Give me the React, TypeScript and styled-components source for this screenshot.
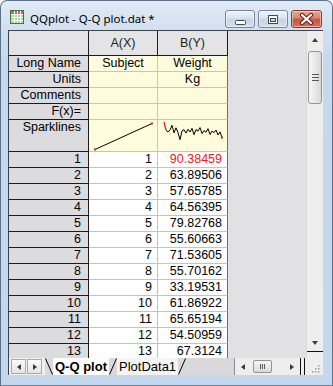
import styled, { createGlobalStyle, css } from 'styled-components';

const GlobalStyle = createGlobalStyle`
  html, body {
    margin: 0;
    padding: 0;
    background: #ffffff;
  }
  body {
    font-family: 'Liberation Sans', Arial, sans-serif;
  }
`;

const WEIGHTS = [
  '90.38459', '63.89506', '57.65785', '64.56395', '79.82768', '55.60663', '71.53605',
  '55.70162', '33.19531', '61.86922', '65.65194', '54.50959', '67.3124',
];

// values past row 13 are not visible, only used for the sparkline shape
const SPARK_B = [
  90.38, 63.9, 57.66, 64.56, 79.83, 55.61, 71.54, 55.7, 33.2, 61.87, 65.65, 54.51, 67.31,
  58.2, 70.1, 49.5, 66.3, 60.8, 72.4, 52.9, 63.0, 57.1, 68.8, 50.2, 61.4, 55.9, 64.7, 48.3, 58.6, 40.1,
];

const META_ROWS = [
  { label: 'Long Name', a: 'Subject', b: 'Weight' },
  { label: 'Units', a: '', b: 'Kg' },
  { label: 'Comments', a: '', b: '' },
  { label: 'F(x)=', a: '', b: '' },
];

export default function App() {
  const sparkPts = SPARK_B.map((v, i) => [6 + i * 2, 2 + (90.38 - v) * 0.31] as const);
  const sparkLine = sparkPts.slice(1).map(([x, y]) => `${x},${y.toFixed(1)}`).join(' ');
  const last = sparkPts[sparkPts.length - 1];

  return (
    <>
      <GlobalStyle />
      <Window>
        <TitleBar>
          <AppIcon viewBox="0 0 14 14">
            <rect x="0.5" y="0.5" width="13" height="13" fill="#a6dca0" stroke="#3c7a3a" />
            <rect x="1" y="1" width="12" height="3" fill="#e4576b" />
            <path d="M4.5 1v12M7.5 1v12M10.5 1v12M1 4.5h12M1 7.5h12M1 10.5h12" stroke="#ffffff" strokeWidth="1" />
          </AppIcon>
          <Title>QQplot - Q-Q plot.dat *</Title>
          <CaptionButtons>
            <CaptionButton>
              <svg width="11" height="12" viewBox="0 0 11 12">
                <rect x="0.5" y="7.5" width="10" height="4" rx="1" fill="#ffffff" stroke="#3a4a5e" />
              </svg>
            </CaptionButton>
            <CaptionButton>
              <svg width="10" height="9" viewBox="0 0 10 9">
                <rect x="0.5" y="0.5" width="9" height="8" fill="#ffffff" stroke="#3a4a5e" />
                <rect x="2.5" y="3.5" width="5" height="3" fill="#c9d6e6" stroke="#3a4a5e" />
              </svg>
            </CaptionButton>
            <CaptionButton $close>
              <svg width="15" height="12" viewBox="0 0 15 12">
                <path d="M3 2l9 8M12 2l-9 8" stroke="#5a2118" strokeWidth="4.2" strokeLinecap="round" />
                <path d="M3 2l9 8M12 2l-9 8" stroke="#ffffff" strokeWidth="2.2" strokeLinecap="round" />
              </svg>
            </CaptionButton>
          </CaptionButtons>
        </TitleBar>

        <Client>
          <Main>
            <Sheet>
              <Row $h={25}>
                <ColHead $w={80} />
                <ColHead $w={69}>A(X)</ColHead>
                <ColHead $w={70}>B(Y)</ColHead>
              </Row>
              {META_ROWS.map((r) => (
                <Row key={r.label} $h={16}>
                  <LabelCell>{r.label}</LabelCell>
                  <MetaCell $w={69}>{r.a}</MetaCell>
                  <MetaCell $w={70} $edge>{r.b}</MetaCell>
                </Row>
              ))}
              <Row $h={32}>
                <LabelCell>Sparklines</LabelCell>
                <MetaCell $w={69}>
                  <Spark viewBox="0 0 68 31">
                    <line x1="6" y1="29.5" x2="63" y2="3.5" stroke="#000" strokeWidth="1" />
                    <rect x="5" y="28.5" width="2" height="2" fill="#e0201f" />
                    <rect x="62" y="2.5" width="2" height="2" fill="#e0201f" />
                  </Spark>
                </MetaCell>
                <MetaCell $w={70} $edge>
                  <Spark viewBox="0 0 69 31">
                    <polyline points={sparkLine} fill="none" stroke="#000" strokeWidth="1" />
                    <line
                      x1={sparkPts[0][0]}
                      y1={sparkPts[0][1]}
                      x2={sparkPts[1][0]}
                      y2={sparkPts[1][1]}
                      stroke="#e0201f"
                      strokeWidth="1.3"
                    />
                    <rect x={last[0] - 1} y={last[1] - 1} width="2" height="2" fill="#e0201f" />
                  </Spark>
                </MetaCell>
              </Row>
              {WEIGHTS.map((w, i) => (
                <Row key={i} $h={16}>
                  <RowNum>{i + 1}</RowNum>
                  <DataCell $w={69}>{i + 1}</DataCell>
                  <DataCell $w={70} $edge $red={i === 0}>
                    {w}
                  </DataCell>
                </Row>
              ))}
            </Sheet>

            <VScroll>
              <ArrowBox>
                <Arrow $dir="up" />
              </ArrowBox>
              <Thumb>
                <Grip />
              </Thumb>
              <Track />
              <ArrowBox>
                <Arrow $dir="down" />
              </ArrowBox>
              <SplitBox />
            </VScroll>
          </Main>

          <BottomBar>
            <TabNav>
              <NavButton>
                <Arrow $dir="left" />
              </NavButton>
              <NavButton>
                <Arrow $dir="right" />
              </NavButton>
            </TabNav>
            <Tabs>
              <Slant viewBox="0 0 8 17">
                <path d="M0.5 0.5L7.5 16.5" stroke="#000" fill="none" />
              </Slant>
              <Tab $active>Q-Q plot</Tab>
              <Slant viewBox="0 0 8 17">
                <path d="M7.5 0.5L0.5 16.5" stroke="#000" fill="none" />
              </Slant>
              <Tab>PlotData1</Tab>
              <Slant viewBox="0 0 8 17">
                <path d="M7.5 0.5L0.5 16.5" stroke="#000" fill="none" />
              </Slant>
            </Tabs>
            <HScroll>
              <ArrowBox $h>
                <Arrow $dir="left" />
              </ArrowBox>
              <HThumb>
                <HGrip />
              </HThumb>
              <Track />
              <ArrowBox $h>
                <Arrow $dir="right" />
              </ArrowBox>
            </HScroll>
            <SplitBar />
            <SizeGrip viewBox="0 0 18 17">
              {[
                [13, 13], [10, 13], [7, 13], [13, 10], [10, 10], [13, 7],
              ].map(([x, y]) => (
                <rect key={`${x}-${y}`} x={x} y={y} width="1.5" height="1.5" fill="#9a9a9a" />
              ))}
            </SizeGrip>
          </BottomBar>
        </Client>
      </Window>
    </>
  );
}

const Window = styled.div`
  box-sizing: border-box;
  width: 333px;
  height: 386px;
  display: flex;
  flex-direction: column;
  padding: 0 9px 10px 7px;
  border: 1px solid #5d7189;
  border-bottom-color: #6f8398;
  border-radius: 7px 7px 0 0;
  background: linear-gradient(to bottom, #e1eaf5 0, #d2e0f0 28px, #c5d8ed 60px, #c3d7ee 100%);
`;

const TitleBar = styled.div`
  height: 29px;
  flex: none;
  display: flex;
  align-items: flex-start;
`;

const AppIcon = styled.svg`
  width: 14px;
  height: 14px;
  flex: none;
  margin: 9px 6px 0 2px;
`;

const Title = styled.div`
  margin-top: 9px;
  font-family: 'Noto Sans', 'Open Sans', sans-serif;
  font-size: 11.5px;
  line-height: 17px;
  color: #000;
  white-space: nowrap;
`;

const CaptionButtons = styled.div`
  margin: 9px 1px 0 auto;
  display: flex;
  gap: 3px;
`;

const CaptionButton = styled.div<{ $close?: boolean }>`
  box-sizing: border-box;
  width: ${(p) => (p.$close ? 31 : 30)}px;
  height: 18px;
  display: flex;
  align-items: center;
  justify-content: center;
  border: 1px solid ${(p) => (p.$close ? '#8a3a2e' : '#74879e')};
  border-radius: 3px;
  box-shadow: inset 0 0 0 1px rgba(255, 255, 255, 0.45);
  background: ${(p) =>
    p.$close
      ? 'linear-gradient(to bottom, #e9a696 0, #d88371 45%, #c75540 50%, #d46e55 100%)'
      : 'linear-gradient(to bottom, #eef3f9 0, #d9e4f0 45%, #c6d4e5 50%, #d2deec 100%)'};
`;

const Client = styled.div`
  flex: 1;
  display: flex;
  flex-direction: column;
  border-top: 1px solid #3f434a;
  border-left: 1px solid #3f434a;
  background: #dedede;
  overflow: hidden;
`;

const Main = styled.div`
  height: 327px;
  flex: none;
  display: flex;
`;

const Sheet = styled.div`
  flex: 1;
  display: flex;
  flex-direction: column;
  background: #e1e1e4;
  overflow: hidden;
`;

const Row = styled.div<{ $h: number }>`
  flex: none;
  height: ${(p) => p.$h}px;
  display: flex;
`;

const cellBase = css`
  box-sizing: border-box;
  flex: none;
  height: 100%;
  display: flex;
  font-size: 12.5px;
  line-height: 15px;
  white-space: nowrap;
  overflow: hidden;
  color: #000;
`;

const ColHead = styled.div<{ $w: number }>`
  ${cellBase};
  width: ${(p) => p.$w}px;
  align-items: center;
  justify-content: center;
  background: #e4e4e6;
  border-right: 1px solid #1c1c1c;
  border-bottom: 1px solid #1c1c1c;
  color: #222;
`;

const LabelCell = styled.div`
  ${cellBase};
  width: 80px;
  justify-content: flex-end;
  padding-right: 7px;
  background: #dcdcdf;
  border-right: 1px solid #1c1c1c;
  border-bottom: 1px solid #1c1c1c;
`;

const RowNum = styled(LabelCell)``;

const MetaCell = styled.div<{ $w: number; $edge?: boolean }>`
  ${cellBase};
  width: ${(p) => p.$w}px;
  justify-content: center;
  background: #fefcdc;
  border-right: 1px solid ${(p) => (p.$edge ? '#6e6e6e' : '#c4c4c4')};
  border-bottom: 1px solid #c4c4c4;
`;

const DataCell = styled.div<{ $w: number; $edge?: boolean; $red?: boolean }>`
  ${cellBase};
  width: ${(p) => p.$w}px;
  justify-content: flex-end;
  padding-right: 5px;
  background: #ffffff;
  color: ${(p) => (p.$red ? '#e0201f' : '#000')};
  border-right: 1px solid ${(p) => (p.$edge ? '#6e6e6e' : '#c4c4c4')};
  border-bottom: 1px solid #c4c4c4;
`;

const Spark = styled.svg`
  width: 100%;
  height: 100%;
  display: block;
`;

const VScroll = styled.div`
  width: 17px;
  flex: none;
  display: flex;
  flex-direction: column;
  align-items: center;
  box-sizing: border-box;
  background: #eeeeee;
  border-left: 1px solid #d9d9d9;
`;

const ArrowBox = styled.div<{ $h?: boolean }>`
  flex: none;
  width: ${(p) => (p.$h ? '16px' : '100%')};
  height: ${(p) => (p.$h ? '100%' : '17px')};
  display: flex;
  align-items: center;
  justify-content: center;
`;

const arrowShapes = {
  up: 'border-left: 3.5px solid transparent; border-right: 3.5px solid transparent; border-bottom: 4px solid #3a3a3a;',
  down: 'border-left: 3.5px solid transparent; border-right: 3.5px solid transparent; border-top: 4px solid #3a3a3a;',
  left: 'border-top: 3.5px solid transparent; border-bottom: 3.5px solid transparent; border-right: 4px solid #3a3a3a;',
  right: 'border-top: 3.5px solid transparent; border-bottom: 3.5px solid transparent; border-left: 4px solid #3a3a3a;',
};

const Arrow = styled.span<{ $dir: keyof typeof arrowShapes }>`
  width: 0;
  height: 0;
  ${(p) => arrowShapes[p.$dir]}
`;

const Thumb = styled.div`
  box-sizing: border-box;
  flex: none;
  width: 14px;
  height: 53px;
  margin-top: 3px;
  display: flex;
  align-items: center;
  justify-content: center;
  border: 1px solid #939393;
  border-radius: 3px;
  background: linear-gradient(to right, #f6f6f6 0, #e8e8e8 50%, #d9d9d9 100%);
`;

const Grip = styled.div`
  width: 7px;
  height: 1px;
  background: #5b5b5b;
  box-shadow: 0 -3px 0 #5b5b5b, 0 3px 0 #5b5b5b;
`;

const Track = styled.div`
  flex: 1;
`;

const SplitBox = styled.div`
  flex: none;
  width: 100%;
  height: 6px;
  border-top: 1px solid #111;
`;

const BottomBar = styled.div`
  height: 17px;
  flex: none;
  display: flex;
  background: #d9d9dc;
`;

const TabNav = styled.div`
  flex: none;
  display: flex;
  gap: 1px;
  padding: 1px 3px 0 2px;
  background: #f0f0f0;
`;

const NavButton = styled.div`
  box-sizing: border-box;
  width: 15px;
  height: 15px;
  display: flex;
  align-items: center;
  justify-content: center;
  border: 1px solid #a9a9a9;
  background: linear-gradient(to bottom, #fbfbfb, #e4e4e4);
`;

const Tabs = styled.div`
  flex: none;
  display: flex;
  height: 100%;
`;

const Slant = styled.svg`
  width: 8px;
  height: 17px;
  flex: none;
  display: block;
`;

const Tab = styled.div<{ $active?: boolean }>`
  height: 100%;
  display: flex;
  align-items: center;
  padding: 0 2px;
  font-size: 13px;
  font-weight: ${(p) => (p.$active ? 700 : 400)};
  background: ${(p) => (p.$active ? '#ffffff' : '#f4f4f4')};
  color: #000;
`;

const HScroll = styled.div`
  box-sizing: border-box;
  margin-left: auto;
  width: 66px;
  flex: none;
  display: flex;
  align-items: center;
  background: #eeeeee;
  border-left: 1px solid #8c8c8c;
`;

const HThumb = styled.div`
  box-sizing: border-box;
  width: 19px;
  height: 13px;
  margin-left: 2px;
  display: flex;
  align-items: center;
  justify-content: center;
  border: 1px solid #939393;
  border-radius: 2px;
  background: linear-gradient(to bottom, #f6f6f6, #dadada);
`;

const HGrip = styled.div`
  width: 1px;
  height: 5px;
  background: #5b5b5b;
  box-shadow: -2px 0 0 #5b5b5b, 2px 0 0 #5b5b5b;
`;

const SplitBar = styled.div`
  width: 3px;
  flex: none;
  border-left: 1px solid #111;
  border-right: 1px solid #111;
  background: #eeeeee;
`;

const SizeGrip = styled.svg`
  width: 18px;
  height: 17px;
  flex: none;
  background: #eeeeee;
`;
